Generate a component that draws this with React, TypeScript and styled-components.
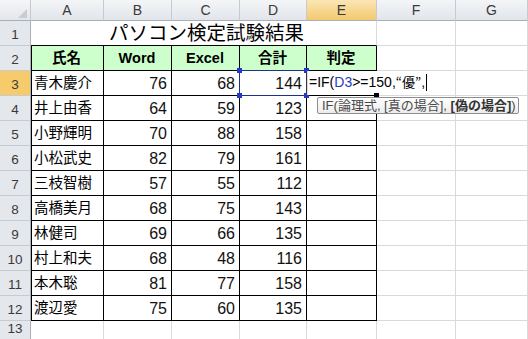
import React from "react";
import styled, { createGlobalStyle } from "styled-components";

const GlobalStyle = createGlobalStyle`
  html, body { margin: 0; padding: 0; background: #fff; }
  body { width: 528px; height: 339px; overflow: hidden; }
`;

const GRID = "#d9d9d9";
const JP = `"Liberation Sans", "Noto Sans CJK JP", sans-serif`;

const Sheet = styled.div`
  position: relative;
  display: grid;
  grid-template-columns: 31px 73px 68px 68px 67px 70px 79px 72px;
  grid-template-rows: 21px repeat(12, 25px) 19px;
  width: 528px;
  height: 339px;
  overflow: hidden;
  font-family: ${JP};
  color: #000;
  background: #fff;
`;

const Corner = styled.div`
  position: relative;
  box-sizing: border-box;
  background: linear-gradient(#f5f6f8, #e3e6ea);
  border-right: 1px solid #c4c9cf;
  border-bottom: 1px solid #a9b0b9;
  &::after {
    content: "";
    position: absolute;
    right: 3px;
    bottom: 2px;
    border-left: 9px solid transparent;
    border-bottom: 9px solid #c9ccd1;
  }
`;

const ColHeader = styled.div<{ $active?: boolean }>`
  box-sizing: border-box;
  display: flex;
  align-items: center;
  justify-content: center;
  font-size: 14px;
  color: #3a3a3a;
  border-right: 1px solid #c6cbd1;
  border-bottom: 1px solid #a9b0b9;
  background: ${(p) =>
    p.$active
      ? "linear-gradient(#fbe6b4, #f3c96f)"
      : "linear-gradient(#f4f5f7, #e1e5ea)"};
`;

const RowHeader = styled.div<{ $active?: boolean }>`
  box-sizing: border-box;
  display: flex;
  align-items: flex-end;
  justify-content: center;
  padding-bottom: 2px;
  font-size: 13.5px;
  line-height: 16px;
  color: #3a3a3a;
  border-right: 1px solid #a9b0b9;
  border-bottom: 1px solid #c6cbd1;
  background: ${(p) => (p.$active ? "#f6cb6c" : "#e4e7ec")};
`;

const Title = styled.div`
  grid-column: span 5;
  box-sizing: border-box;
  display: flex;
  align-items: flex-end;
  justify-content: center;
  padding: 0 0 1px 6px;
  font-size: 19.5px;
  line-height: 22px;
  border-right: 1px solid ${GRID};
  border-bottom: 1px solid #000;
`;

type CellProps = {
  $table?: boolean;
  $left?: boolean;
  $head?: boolean;
  $num?: boolean;
};

const Cell = styled.div<CellProps>`
  box-sizing: border-box;
  display: flex;
  align-items: flex-end;
  justify-content: ${(p) => (p.$head ? "center" : p.$num ? "flex-end" : "flex-start")};
  padding: 0 4px 2px 3px;
  border-right: 1px solid ${(p) => (p.$table ? "#000" : GRID)};
  border-bottom: 1px solid ${(p) => (p.$table ? "#000" : GRID)};
  box-shadow: ${(p) => (p.$left ? "inset 1px 0 0 #000" : "none")};
  background: ${(p) => (p.$head ? "#ccffcc" : "#fff")};
  font-size: ${(p) => (p.$num ? "16px" : "14.5px")};
  font-weight: ${(p) => (p.$head ? 700 : 400)};
  color: ${(p) => (p.$num ? "#111" : "#000")};
  line-height: 19px;
  white-space: nowrap;
`;

const RefBox = styled.div`
  position: absolute;
  left: 239px;
  top: 70px;
  width: 68px;
  height: 26px;
  box-sizing: border-box;
  border: 1px solid #1f2f8f;
`;

const Handle = styled.div<{ $x: "l" | "r"; $y: "t" | "b" }>`
  position: absolute;
  width: 5px;
  height: 5px;
  background: #2238c6;
  ${(p) => (p.$x === "l" ? "left: -3px;" : "right: -3px;")}
  ${(p) => (p.$y === "t" ? "top: -3px;" : "bottom: -3px;")}
`;

const EditBox = styled.div`
  position: absolute;
  left: 307px;
  top: 71px;
  height: 24px;
  box-sizing: border-box;
  padding: 0 3px 0 1px;
  background: #fff;
  border-left: 1px solid #efe39c;
  font-size: 14px;
  line-height: 22px;
  white-space: nowrap;
`;

const RefText = styled.span`
  color: #2a3bc2;
`;

const Quote = styled.span`
  font-family: "Noto Sans CJK JP", sans-serif;
  font-size: 13px;
`;

const Caret = styled.span`
  display: inline-block;
  width: 1px;
  height: 17px;
  margin-left: 1px;
  vertical-align: -4px;
  background: #000;
`;

const FillHandle = styled.div`
  position: absolute;
  left: 374px;
  top: 93px;
  width: 5px;
  height: 4px;
  background: #000;
`;

const Tip = styled.div`
  position: absolute;
  left: 317px;
  top: 97px;
  width: 202px;
  height: 17px;
  box-sizing: border-box;
  padding-left: 4px;
  border: 1px solid #8c8c8c;
  border-radius: 2px;
  background: linear-gradient(#ffffff, #ececec);
  font-size: 13px;
  line-height: 15px;
  color: #4a4a4a;
  white-space: nowrap;
`;

const TipBold = styled.b`
  font-weight: 700;
  color: #333;
`;

const data: [string, number, number, number][] = [
  ["青木慶介", 76, 68, 144],
  ["井上由香", 64, 59, 123],
  ["小野輝明", 70, 88, 158],
  ["小松武史", 82, 79, 161],
  ["三枝智樹", 57, 55, 112],
  ["高橋美月", 68, 75, 143],
  ["林健司", 69, 66, 135],
  ["村上和夫", 68, 48, 116],
  ["本木聡", 81, 77, 158],
  ["渡辺愛", 75, 60, 135],
];

const letters = ["A", "B", "C", "D", "E", "F", "G"];
const heads = ["氏名", "Word", "Excel", "合計", "判定"];

export default function App() {
  return (
    <>
      <GlobalStyle />
      <Sheet>
        <Corner />
        {letters.map((l) => (
          <ColHeader key={l} $active={l === "E"}>
            {l}
          </ColHeader>
        ))}

        <RowHeader>1</RowHeader>
        <Title>パソコン検定試験結果</Title>
        <Cell />
        <Cell />

        <RowHeader>2</RowHeader>
        {heads.map((h, i) => (
          <Cell key={h} $table $head $left={i === 0}>
            {h}
          </Cell>
        ))}
        <Cell />
        <Cell />

        {data.map(([name, w, e, t], i) => (
          <React.Fragment key={name}>
            <RowHeader $active={i === 0}>{i + 3}</RowHeader>
            <Cell $table $left>
              {name}
            </Cell>
            <Cell $table $num>
              {w}
            </Cell>
            <Cell $table $num>
              {e}
            </Cell>
            <Cell $table $num>
              {t}
            </Cell>
            <Cell $table />
            <Cell />
            <Cell />
          </React.Fragment>
        ))}

        <RowHeader>13</RowHeader>
        {letters.map((l) => (
          <Cell key={l} />
        ))}

        <RefBox>
          <Handle $x="l" $y="t" />
          <Handle $x="r" $y="t" />
          <Handle $x="l" $y="b" />
          <Handle $x="r" $y="b" />
        </RefBox>
        <EditBox>
          =IF(<RefText>D3</RefText>&gt;=150,<Quote>“優”</Quote>,
          <Caret />
        </EditBox>
        <FillHandle />
        <Tip>
          IF(論理式, [真の場合], <TipBold>[偽の場合]</TipBold>)
        </Tip>
      </Sheet>
    </>
  );
}
